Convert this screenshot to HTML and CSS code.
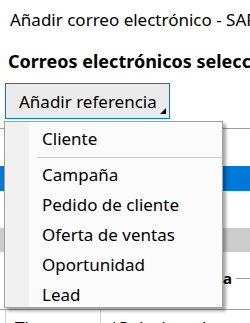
FILE: index.html
```html
<!DOCTYPE html>
<html lang="es">
<head>
  <meta charset="UTF-8" />
  <meta name="viewport" content="width=device-width, initial-scale=1.0" />
  <title>Añadir correo electrónico - SAP</title>
  <link rel="stylesheet" href="styles.css">
</head>
<body>
  <div class="window">
    <div class="title">Añadir correo electrónico - SAP Business One</div>

    <div class="heading">Correos electrónicos seleccionados</div>

    <button class="add-ref" type="button">
      <span>Añadir referencia</span>
      <svg class="caret" width="6" height="6" viewBox="0 0 6 6"><polygon points="6,0 6,6 0,6" fill="#000"/></svg>
    </button>

    <!-- List behind the dropdown -->
    <div class="list">
      <div class="row"></div>
      <div class="row selected"></div>
      <div class="row"></div>
      <div class="row muted"></div>
    </div>

    <div class="group">
      <div class="group-label">Referencia</div>
      <div class="group-line"></div>
    </div>

    <div class="table-head">
      <div class="col col-type">Tipo</div>
      <div class="col col-rel">|Relacionado con</div>
    </div>

    <!-- Dropdown menu -->
    <ul class="menu">
      <li>Cliente</li>
      <li class="sep"></li>
      <li>Campaña</li>
      <li>Pedido de cliente</li>
      <li>Oferta de ventas</li>
      <li>Oportunidad</li>
      <li>Lead</li>
    </ul>
  </div>
</body>
</html>
```

FILE: styles.css
```css
/* Base */
body {
  margin: 0;
  background: #fff;
  color: #000;
  font-family: 'Noto Sans', sans-serif;
  overflow: hidden;
}

.window {
  position: relative;
  width: 250px;
  height: 323px;
  overflow: hidden;
}

/* Window title */
.title {
  height: 40px;
  padding: 9px 0 0 10px;
  box-sizing: border-box;
  font-size: 17px;
  line-height: 22px;
  white-space: nowrap;
}

/* Section heading */
.heading {
  margin-top: 11px;
  padding-left: 8px;
  font-size: 18px;
  font-weight: 700;
  line-height: 21px;
  white-space: nowrap;
}

/* Split button */
.add-ref {
  display: flex;
  margin: 11px 0 0 5px;
  width: 165px;
  height: 36px;
  padding: 0 3px 4px 13px;
  box-sizing: border-box;
  border: 1px solid #0078d7;
  background: #ebebeb;
  font-family: inherit;
  font-size: 17px;
  color: #000;
  align-items: center;
}

.add-ref span {
  padding-top: 4px;
}

.caret {
  margin-left: auto;
  align-self: flex-end;
}

/* List rows */
.list {
  margin-top: 9px;
  border-top: 1px solid #a0a0a0;
}

.row {
  height: 37px;
}

.row.selected {
  height: 25px;
  background: #0078d7;
}

.row.muted {
  height: 24px;
  background: #cccccc;
}

/* Group header */
.group {
  display: flex;
  align-items: center;
  margin-top: 17px;
  height: 18px;
}

.group-label {
  width: 232px;
  text-align: right;
  font-size: 15px;
  font-weight: 700;
  white-space: nowrap;
  overflow: hidden;
}

.group-line {
  flex: 1;
  margin-left: 4px;
  border-top: 1px solid #a0a0a0;
}

/* Table header */
.table-head {
  display: flex;
  margin-top: 22px;
  border-top: 1px solid #a0a0a0;
  height: 20px;
  padding-left: 5px;
  font-size: 17px;
  line-height: 22px;
}

.col {
  border-left: 1px solid #d0d0d0;
  padding: 7px 0 0 9px;
  white-space: nowrap;
}

.col-type {
  width: 174px;
}

/* Dropdown menu */
.menu {
  position: absolute;
  left: 4px;
  top: 121px;
  width: 219px;
  height: 187px;
  margin: 0;
  padding: 2px 0 0;
  box-sizing: border-box;
  list-style: none;
  border: 1px solid #a0a0a0;
  background: linear-gradient(to right, #f1f1f1 24px, #fbfbfb 24px);
  box-shadow: 3px 3px 3px rgba(0, 0, 0, 0.35);
  overflow: hidden;
  font-size: 17px;
}

.menu li {
  height: 30px;
  line-height: 30px;
  padding-left: 37px;
  white-space: nowrap;
}

.menu li.sep {
  height: 1px;
  margin: 3px 0 2px 32px;
  padding: 0;
  background: #c8c8c8;
}
```
